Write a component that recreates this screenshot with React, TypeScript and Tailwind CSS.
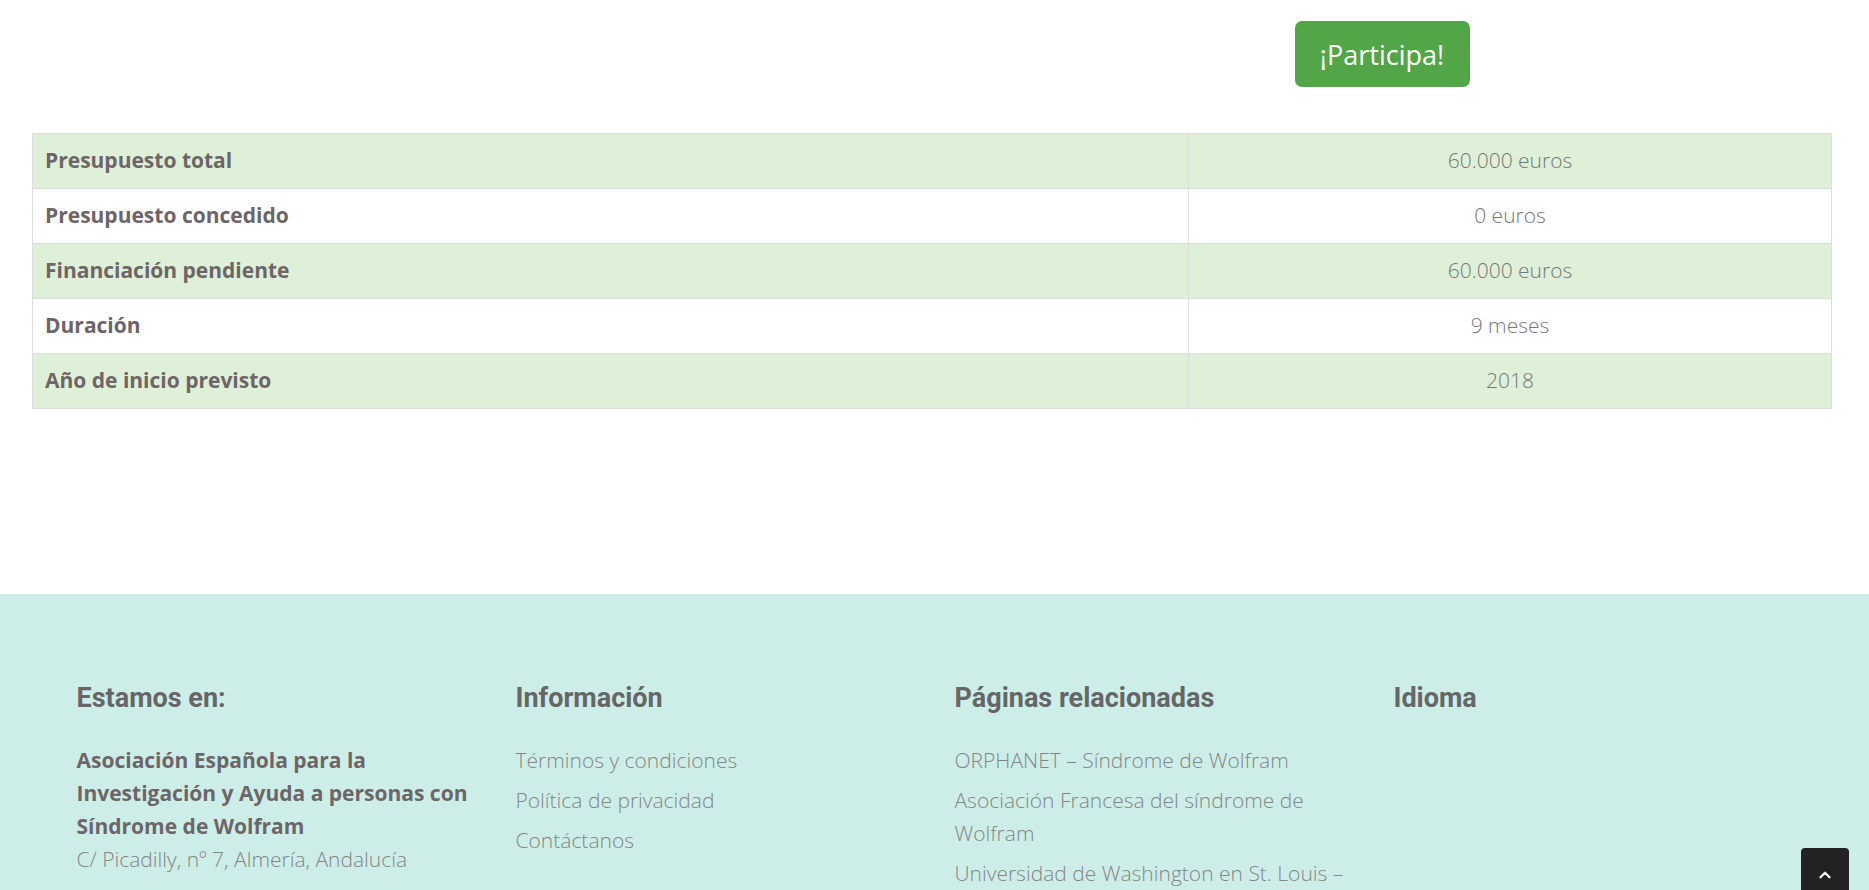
import { ChevronUp } from "lucide-react";

const rows = [
  { label: "Presupuesto total", value: "60.000 euros", green: true },
  { label: "Presupuesto concedido", value: "0 euros", green: false },
  { label: "Financiación pendiente", value: "60.000 euros", green: true },
  { label: "Duración", value: "9 meses", green: false },
  { label: "Año de inicio previsto", value: "2018", green: true },
];

const infoLinks = ["Términos y condiciones", "Política de privacidad", "Contáctanos"];

const relatedLinks = [
  "ORPHANET – Síndrome de Wolfram",
  "Asociación Francesa del síndrome de Wolfram",
  "Universidad de Washington en St. Louis – Wolfram Syndrome",
  "Instituto de Salud Carlos III",
];

function FooterHeading({ children }: { children: React.ReactNode }) {
  return (
    <h3 className="font-['Roboto',sans-serif] text-[27px] font-bold leading-[30px] text-[#666666] mb-[31px]">
      {children}
    </h3>
  );
}

export default function App() {
  return (
    <div className="min-h-screen bg-white font-['Open_Sans',sans-serif]">
      <div className="ml-[32px] w-[1800px]">
        <div className="grid grid-cols-2 pt-[21px]">
          <div />
          <div className="flex justify-center">
            <button className="h-[66px] w-[175px] rounded-[7px] bg-[#52a647] text-[27px] leading-none text-white">
              ¡Participa!
            </button>
          </div>
        </div>

        <table className="mt-[46px] w-full border-collapse border border-[#dddddd]">
          <tbody>
            {rows.map((row) => (
              <tr key={row.label} className={row.green ? "bg-[#dff0d8]" : "bg-white"}>
                <td className="h-[55px] w-[1156px] border border-[#dddddd] px-[12px] text-[21px] font-bold text-[#6d6567]">
                  {row.label}
                </td>
                <td className="h-[55px] border border-[#dddddd] px-[12px] text-center text-[21px] font-light text-[#777777]">
                  {row.value}
                </td>
              </tr>
            ))}
          </tbody>
        </table>
      </div>

      <footer className="mt-[185px] bg-[#cdeee8] pt-[89px] pb-[60px]">
        <div className="mx-auto grid w-[1756px] grid-cols-4">
          <div className="px-[20px]">
            <FooterHeading>Estamos en:</FooterHeading>
            <p className="text-[21px] font-bold leading-[33px] text-[#6d6567]">
              Asociación Española para la Investigación y Ayuda a personas con Síndrome de Wolfram
            </p>
            <p className="text-[21px] font-light leading-[33px] text-[#858585]">
              C/ Picadilly, nº 7, Almería, Andalucía
            </p>
          </div>
          <div className="px-[20px]">
            <FooterHeading>Información</FooterHeading>
            <ul>
              {infoLinks.map((l) => (
                <li key={l} className="mb-[7px] text-[21px] font-light leading-[33px] text-[#858585]">
                  {l}
                </li>
              ))}
            </ul>
          </div>
          <div className="px-[20px]">
            <FooterHeading>Páginas relacionadas</FooterHeading>
            <ul className="w-[432px]">
              {relatedLinks.map((l) => (
                <li key={l} className="mb-[7px] text-[21px] font-light leading-[33px] text-[#858585]">
                  {l}
                </li>
              ))}
            </ul>
          </div>
          <div className="px-[20px]">
            <FooterHeading>Idioma</FooterHeading>
          </div>
        </div>
      </footer>

      <button className="fixed right-[20px] top-[848px] flex h-[48px] w-[48px] items-start justify-center rounded-t-[4px] bg-[#222222] pt-[18px] text-white">
        <ChevronUp className="h-[18px] w-[18px]" strokeWidth={3} />
      </button>
    </div>
  );
}
